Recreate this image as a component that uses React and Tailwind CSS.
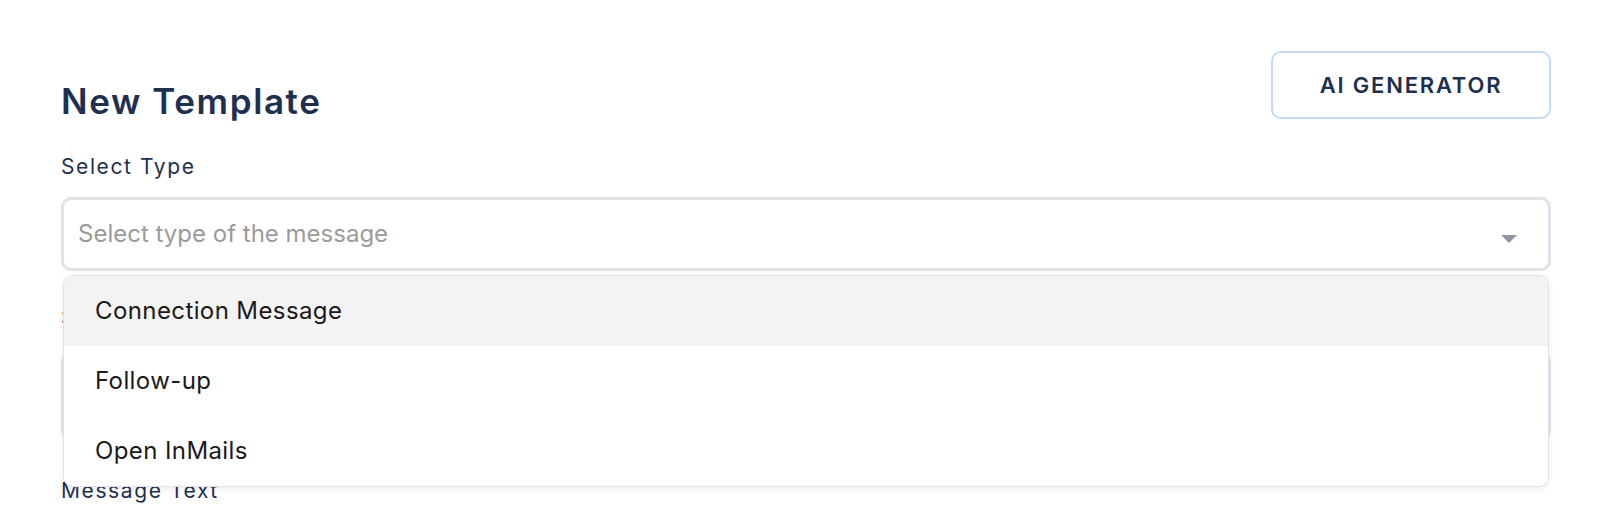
import React from "react";

const options = ["Connection Message", "Follow-up", "Open InMails"];

const Caret = () => (
  <svg width="16" height="8" viewBox="0 0 16 8" className="mt-[10px]">
    <path d="M0 0 H16 L8 8 Z" fill="#8f95a3" />
  </svg>
);

export default function App() {
  return (
    <div className="h-[509px] overflow-hidden bg-white font-['Inter',sans-serif]">
      <div className="ml-[61px] w-[1490px] pt-[51px]">
        {/* Header */}
        <div className="flex items-start justify-between">
          <h1 className="mt-[28px] text-[35px] leading-[44px] font-semibold tracking-[1.6px] text-[#1e3050]">
            New Template
          </h1>
          <button
            type="button"
            className="h-[68px] w-[280px] rounded-[10px] border-2 border-[#c3dafd] bg-white text-[22px] font-semibold tracking-[1.8px] text-[#1e3050]"
          >
            AI GENERATOR
          </button>
        </div>

        <label className="mt-[30px] block text-[21px] leading-[28px] tracking-[1.6px] text-[#1e3050]">
          Select Type
        </label>

        {/* Select with open menu */}
        <div className="relative mt-[16px]">
          <div className="flex h-[74px] items-center justify-between rounded-[10px] border-[3px] border-[#dfe2e7] pl-[14px] pr-[31px]">
            <span className="text-[24px] tracking-[0px] text-[#9b9b9b]">
              Select type of the message
            </span>
            <Caret />
          </div>

          <label className="mt-[33px] block text-[21px] leading-[28px] tracking-[1.6px] text-[#1e3050]">
            Subject
          </label>
          <div className="mt-[20px] h-[88px] rounded-[10px] border-[3px] border-[#dfe2e7]"></div>

          <label className="mt-[37px] block text-[21px] leading-[28px] tracking-[1.6px] text-[#1e3050]">
            Message Text
          </label>

          <div className="absolute left-[2px] right-[2px] top-[78px] z-10 overflow-hidden rounded-[10px] border border-[#dfe3e8] bg-white shadow-[0_2px_6px_rgba(0,0,0,0.08)]">
            {options.map((opt, i) => (
              <div
                key={opt}
                className={`flex h-[70px] items-center pl-[31px] text-[24px] tracking-[0.4px] text-[#1a1a1a] ${
                  i === 0 ? "bg-[#f3f3f3]" : "bg-white"
                }`}
              >
                {opt}
              </div>
            ))}
          </div>
        </div>
      </div>
    </div>
  );
}
